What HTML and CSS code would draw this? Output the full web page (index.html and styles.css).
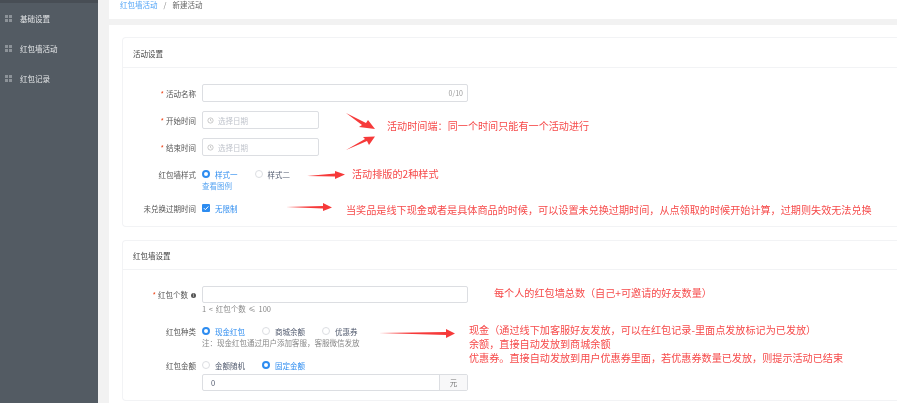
FILE: index.html
```html
<!DOCTYPE html>
<html lang="zh">
<head>
<meta charset="utf-8">
<title>新建活动</title>
<link rel="stylesheet" href="styles.css">
</head>
<body>
<div class="app">
  <aside class="sidebar">
    <div class="menu-item"><span class="grid-icon"><i></i><i></i><i></i><i></i></span>基础设置</div>
    <div class="menu-item"><span class="grid-icon"><i></i><i></i><i></i><i></i></span>红包墙活动</div>
    <div class="menu-item"><span class="grid-icon"><i></i><i></i><i></i><i></i></span>红包记录</div>
  </aside>
  <main class="main">
    <nav class="crumbs"><span class="crumb-link">红包墙活动</span><span class="crumb-sep">/</span><span>新建活动</span></nav>
    <section class="panel">
      <div class="card">
        <h2 class="card-title">活动设置</h2>
        <div class="card-body">
          <div class="row">
            <label class="label"><b>*</b>活动名称</label>
            <div class="input wide"><span class="count">0/10</span></div>
          </div>
          <div class="row">
            <label class="label"><b>*</b>开始时间</label>
            <div class="input date"><svg class="clock" viewBox="0 0 8 8"><circle cx="4" cy="4" r="3" /><path d="M4 2.2V4l1.3.8" /></svg>选择日期</div>
          </div>
          <div class="row">
            <label class="label"><b>*</b>结束时间</label>
            <div class="input date"><svg class="clock" viewBox="0 0 8 8"><circle cx="4" cy="4" r="3" /><path d="M4 2.2V4l1.3.8" /></svg>选择日期</div>
          </div>
          <div class="row">
            <label class="label">红包墙样式</label>
            <div class="options">
              <span class="opt on"><i class="radio"></i>样式一</span>
              <span class="opt"><i class="radio"></i>样式二</span>
            </div>
          </div>
          <div class="sub link">查看图例</div>
          <div class="row check-row">
            <label class="label">未兑换过期时间</label>
            <div class="options">
              <span class="opt on"><svg class="checkbox" viewBox="0 0 8 8"><path d="M1.8 4.1l1.6 1.6 2.9-3.2" /></svg>无限制</span>
            </div>
          </div>
        </div>
      </div>
      <div class="card second">
        <h2 class="card-title">红包墙设置</h2>
        <div class="card-body">
          <div class="row count-row">
            <label class="label"><b>*</b>红包个数<em class="info">i</em></label>
            <div class="input wide"></div>
          </div>
          <div class="sub hint">1 &lt; 红包个数 ≤ 100</div>
          <div class="row radio-row">
            <label class="label">红包种类</label>
            <div class="options">
              <span class="opt on"><i class="radio"></i>现金红包</span>
              <span class="opt"><i class="radio"></i>商城余额</span>
              <span class="opt"><i class="radio"></i>优惠券</span>
            </div>
          </div>
          <div class="sub note">注：现金红包通过用户添加客服，客服微信发放</div>
          <div class="row amount-row">
            <label class="label">红包金额</label>
            <div class="options">
              <span class="opt"><i class="radio"></i>金额随机</span>
              <span class="opt on"><i class="radio"></i>固定金额</span>
            </div>
          </div>
          <div class="input wide addon-input"><span class="value">0</span><span class="addon">元</span></div>
        </div>
      </div>
    </section>
  </main>

  <svg class="arrows" viewBox="0 0 897 403">
    <polygon points="346,113 366,123 368,120 375,129 359,127 362,125" />
    <polygon points="346,150 365,139 363,137 375,136.5 369,145 367,141" />
    <polygon points="307,176 335,173.5 335,171 345,174.5 335,179 335,176.5" />
    <polygon points="286,207 323,206 323,203 332,207.5 323,211 323,208.5" />
    <polygon points="379,333 446,332 446,329 455,333.5 446,338 446,335" />
  </svg>
  <p class="note-text n1">活动时间端：同一个时间只能有一个活动进行</p>
  <p class="note-text n2">活动排版的2种样式</p>
  <p class="note-text n3">当奖品是线下现金或者是具体商品的时候，可以设置未兑换过期时间，从点领取的时候开始计算，过期则失效无法兑换</p>
  <p class="note-text n4">每个人的红包墙总数（自己+可邀请的好友数量）</p>
  <div class="note-text n5">
    <p>现金（通过线下加客服好友发放，可以在红包记录-里面点发放标记为已发放）</p>
    <p>余额，直接自动发放到商城余额</p>
    <p>优惠券。直接自动发放到用户优惠券里面，若优惠券数量已发放，则提示活动已结束</p>
  </div>
</div>
</body>
</html>
```
FILE: styles.css
```css
* { box-sizing: border-box; }
html, body { margin: 0; height: 403px; overflow: hidden; background: #f2f2f2; }
body { font-family: "Noto Sans CJK SC", "Noto Sans", sans-serif; font-size: 7.5px; color: #515a6e; }
.app { position: relative; display: flex; width: 897px; height: 403px; overflow: hidden; filter: blur(0.3px); }

.sidebar { width: 98px; flex: none; background: #535b63; border-top: 3px solid #484e55; color: #e4e6e8; }
.menu-item { height: 30px; display: flex; align-items: center; padding-left: 5px; gap: 8px; }
.grid-icon { display: grid; grid-template-columns: 3px 3px; gap: 1px; }
.grid-icon i { width: 3px; height: 3px; background: #8c9298; }

.main { flex: 1; margin-left: 11px; min-width: 0; display: flex; flex-direction: column; }
.crumbs { height: 19px; flex: none; background: #fff; padding-left: 11px; line-height: 10px; color: #666; }
.crumb-link { color: #55a6f7; }
.crumb-sep { margin: 0 6px; color: #888; }

.panel { flex: 1; margin-top: 6px; background: #fff; padding: 12px 0 0 13px; }
.card { border: 1px solid #f2f3f5; border-right: 0; border-radius: 4px 0 0 4px; }
.second { margin-top: 13px; }
.card-title { margin: 0; height: 30px; line-height: 31px; padding-left: 10px; font-size: 7.5px; font-weight: 400; color: #444; border-bottom: 1px solid #f2f3f5; }
.second .card-title { height: 29px; line-height: 29px; }
.card-body { padding: 16px 0 9px 0; }

.row { display: flex; align-items: center; min-height: 18px; margin-bottom: 9px; }
.count-row { min-height: 17px; }
.count-row .input { height: 17px; }
.label { width: 73px; flex: none; margin-right: 6px; text-align: right; color: #555; white-space: nowrap; }
.label b { color: #ed4014; font-weight: 400; margin-right: 2px; }
.info { display: inline-block; width: 5px; height: 5px; margin-left: 3px; border-radius: 50%; background: #555; color: #fff; font-size: 4px; line-height: 5px; text-align: center; font-style: normal; vertical-align: 1px; }

.input { height: 18px; border: 1px solid #dcdee2; border-radius: 2px; background: #fff; display: flex; align-items: center; }
.wide { width: 266px; }
.date { width: 117px; padding-left: 4px; color: #c0c4cc; }
.clock { width: 7px; height: 7px; margin-right: 4px; fill: none; stroke: #aaa; stroke-width: .7; }
.count { margin-left: auto; margin-right: 4px; color: #999; font-size: 7px; }

.options { display: flex; align-items: center; gap: 17px; }
.opt { display: flex; align-items: center; gap: 5px; color: #515a6e; }
.opt.on { color: #2d8cf0; }
.radio { width: 8px; height: 8px; border-radius: 50%; border: 1px solid #dcdee2; background: #fff; flex: none; }
.on .radio { border: 2.5px solid #2d8cf0; }
.checkbox { width: 8px; height: 8px; background: #2d8cf0; border-radius: 1px; fill: none; stroke: #fff; stroke-width: 1; }

.sub { margin-left: 79px; height: 10px; line-height: 10px; }
.link { margin-top: -11px; color: #5aa6f2; }
.check-row { margin-top: 8px; margin-bottom: 0; }
.hint { margin-top: -8px; color: #888; word-spacing: 1px; }
.hint + .radio-row { margin-top: 8px; }
.radio-row { margin-bottom: 2px; }
.note { color: #888; margin-top: -4px; }
.amount-row { margin-top: 8px; margin-bottom: 0; }
.addon-input { margin-left: 79px; margin-top: 0; height: 17px; padding-left: 8px; overflow: hidden; color: #515a6e; }
.addon { margin-left: auto; width: 28px; height: 100%; background: #f8f8f9; border-left: 1px solid #dcdee2; text-align: center; line-height: 15px; color: #777; }

.arrows { position: absolute; left: 0; top: 0; width: 897px; height: 403px; pointer-events: none; }
.arrows polygon { fill: #f63a3a; }
.note-text { position: absolute; margin: 0; font-size: 10.12px; line-height: 14px; color: #f64a4a; white-space: nowrap; }
.note-text p { margin: 0; }
.n1 { left: 387px; top: 119px; }
.n2 { left: 352px; top: 167px; }
.n3 { left: 346px; top: 203px; }
.n4 { left: 494px; top: 286px; }
.n5 { left: 469px; top: 323px; }
```
